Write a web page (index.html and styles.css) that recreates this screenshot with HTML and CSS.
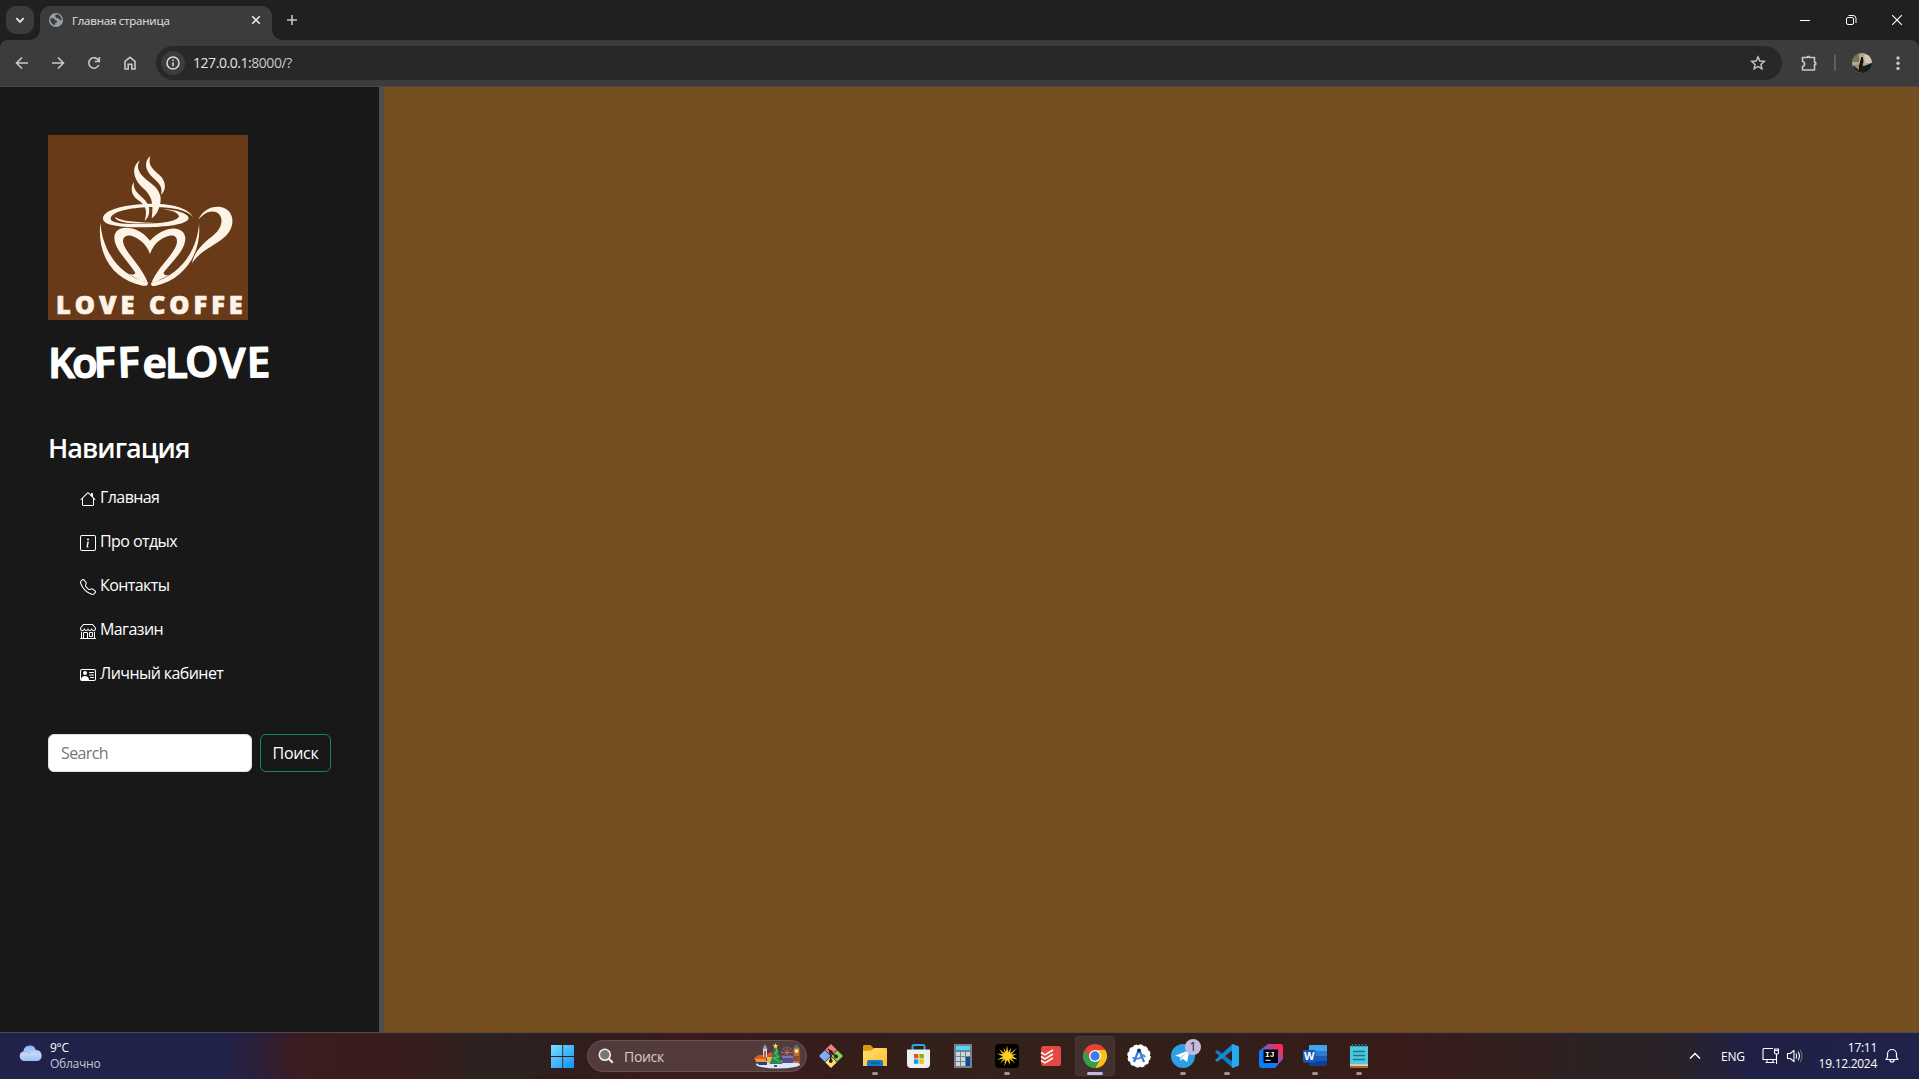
FILE: index.html
```html
<!DOCTYPE html>
<html lang="ru">
<head>
<meta charset="utf-8">
<title>Главная страница</title>
<link rel="stylesheet" href="styles.css">
</head>
<body>
<div class="screen">
  <header class="tabstrip">
    <div class="tab-search"><svg width="28" height="28" viewBox="0 0 28 28"><path d="M10.3 12.2l3.7 3.7 3.7-3.7" fill="none" stroke="#e3e3e3" stroke-width="1.9"/></svg></div>
    <div class="tab">
      <svg width="14" height="14" viewBox="0 0 14 14"><circle cx="7" cy="7" r="7" fill="#9aa0a8"/><path d="M1.6 5.2l3.2.1 1.5 1.9 1.9.5-.3 1.7-1.8.5v2.3A5.6 5.6 0 0 1 1.6 5.2zM6.5 1.5l3-.1a6 6 0 0 1 2.9 3.9v2.2l-1.7-.6-1.2-1.7-2.2-.1-1-1.3z" fill="#3c3c3c"/></svg>
      <span class="tab-title">Главная страница</span>
      <svg class="tab-close" width="10" height="10" viewBox="0 0 10 10"><path d="M1.2 1.2l7.6 7.6M8.800 1.2L1.2 8.800" stroke="#e3e3e3" stroke-width="1.6"/></svg>
    </div>
    <svg class="tab-new" width="12" height="12" viewBox="0 0 12 12"><path d="M6 1v10M1 6h10" stroke="#c7c7c7" stroke-width="1.6"/></svg>
    <div class="window-buttons">
      <svg width="46" height="40" viewBox="0 0 46 40"><path d="M18 20.500h10" stroke="#fff"/></svg>
      <svg width="46" height="40" viewBox="0 0 46 40"><rect x="18.500" y="17.500" width="7" height="7" rx="1.500" fill="none" stroke="#fff"/><path d="M20.500 15.500h4.500a3 3 0 0 1 3 3v4.500" fill="none" stroke="#fff"/></svg>
      <svg width="46" height="40" viewBox="0 0 46 40"><path d="M18.200 15.200l9.600 9.600M27.800 15.200l-9.600 9.600" stroke="#fff" stroke-width="1.200"/></svg>
    </div>
  </header>

  <div class="toolbar">
    <div class="nav-buttons">
      <svg viewBox="0 0 16 16"><path d="M14 8H3M8 2.500L2.500 8 8 13.500" /></svg>
      <svg viewBox="0 0 16 16"><path d="M2 8h11M8 2.500L13.500 8 8 13.500" /></svg>
      <svg viewBox="0 0 16 16"><path d="M12.800 10A5.200 5.200 0 1 1 12.600 5.500M13.300 2v4.500H8.800" /></svg>
      <svg viewBox="0 0 16 16"><path d="M3 14V6.300L8 2.300l5 4V14H9.800V9.300H6.200V14z" /></svg>
    </div>
    <div class="address">
      <span class="site-info"><svg width="16" height="16" viewBox="0 0 16 16"><circle cx="8" cy="8" r="6" fill="none" stroke="#dcdcdc" stroke-width="1.500"/><path d="M8 7.200v4M8 4.600v1.500" stroke="#dcdcdc" stroke-width="1.500"/></svg></span>
      <span class="url">127.0.0.1:<span class="url-dim">8000/?</span></span>
      <svg class="star" width="16" height="16" viewBox="0 0 16 16"><path d="M8 1.900l1.800 4.100 4.500.4-3.400 3 1 4.400L8 11.500l-3.900 2.300 1-4.400-3.400-3 4.500-.4z" fill="none" stroke="#c7c7c7" stroke-width="1.400"/></svg>
    </div>
    <div class="toolbar-end">
      <svg width="18" height="18" viewBox="0 0 18 18"><path d="M2.500 3.500H7.500V2.500h1.800v1h5.200v5h1.200v2h-1.200v5.500h-12v-3.500c2.800-.6 2.800-4.500 0-5z" fill="none" stroke="#c7c7c7" stroke-width="1.600" stroke-linejoin="round"/></svg>
      <span class="divider"></span>
      <svg width="20" height="20" viewBox="0 0 20 20"><defs><clipPath id="face"><circle cx="10" cy="10" r="10"/></clipPath></defs><g clip-path="url(#face)"><path d="M0 0h20v20H0z" fill="#b3a78f"/><path d="M0 0h7v9H0z" fill="#7d725d"/><path d="M12 2h8v8h-7z" fill="#cfc8b6"/><path d="M0 13l8-1 4 1 8-3v10H0z" fill="#23291f"/><path d="M9.300 4h1.500l.7 4-1 5-2 5-2 0 1-7z" fill="#16160f"/><path d="M2 13l5-2v6z" fill="#a48c66"/><path d="M11 14l9-4v10H9z" fill="#102219"/></g></svg>
      <svg class="kebab" width="6" height="16" viewBox="0 0 6 16"><g fill="#c7c7c7"><circle cx="3" cy="3" r="1.700"/><circle cx="3" cy="8.200" r="1.700"/><circle cx="3" cy="13.400" r="1.700"/></g></svg>
    </div>
  </div>

  <main class="page">
    <aside class="sidebar">
      <svg class="logo" viewBox="54 45 600 555" width="200" height="185">
        <path d="M54 45h600v555H54z" fill="#693a17"/>
        <g fill="#fdf3e6">
          <path d="M330 121C302 140 310 178 338 203C364 225 372 247 365 295C382 286 396 250 391 228C384 196 352 186 334 164C322 149 321 134 330 121Z"/>
          <path d="M361 108C340 125 346 153 369 173C388 190 399 200 393 224C407 212 409 192 396 173C382 155 350 144 361 108Z"/>
          <path d="M311 186C300 205 304 226 324 240C345 255 354 268 344 303C361 288 363 262 347 243C331 224 309 216 311 186Z"/>
          <path fill-rule="evenodd" d="M346 252C415 247 475 262 489 291C471 268 410 257 346 262C290 265 242 278 242 296C242 312 300 312 347 312C405 310 444 302 447 289C444 277 425 270 392 266C440 269 474 279 476 294C474 313 410 321 346 322C270 322 219 316 219 296C219 270 280 255 346 252Z"/>
          <path d="M255 291C280 307 330 306 380 309C320 313 258 311 255 291Z"/>
          <path d="M211 308C218 396 270 468 354 488C354 496 348 499 338 497C244 478 201 400 211 308Z"/>
          <path d="M507 312C515 397 466 478 375 498C365 499 362 496 364 489C449 466 500 397 507 312Z"/>
          <path d="M354 490C334 435 285 399 279 365C278 347 297 341 315 352C338 364 352 380 360 402C368 380 382 362 405 352C426 342 441 346 441 364C441 397 384 438 364 489L384 483C408 437 466 400 466 354C463 316 405 313 360 362C325 315 256 310 253 351C252 391 302 428 321 468L292 461Z"/>
          <path d="M401 445C392 459 385 472 380 484L418 465C400 469 399 461 401 445ZM314 445C321 459 316 468 297 462L346 491Z"/>
          <path d="M505 299C519 269 549 256 575 262C614 271 619 320 583 352C557 376 511 391 486 430C493 391 525 366 551 345C580 322 582 286 558 276C538 270 520 282 505 299Z"/>
        </g>
        <text class="logo-text" x="78" y="583" textLength="560" lengthAdjust="spacing">LOVE COFFE</text>
      </svg>
      <h1 class="brand"><svg width="240" height="56" viewBox="0 0 240 56"><text class="brand-text" y="43.500" x="0 24 46 70 94.500 117 138 171 199" rotate="0 0 -2 -2 0 0 -3 0 -1">KoFFeLOVE</text></svg></h1>
      <h2 class="nav-title">Навигация</h2>
      <nav class="nav">
        <a><svg viewBox="0 0 16 16"><path d="M8.707 1.500a1 1 0 0 0-1.414 0L.646 8.146a.5.5 0 0 0 .708.708L2 8.207V13.500A1.500 1.500 0 0 0 3.500 15h9a1.500 1.500 0 0 0 1.500-1.500V8.207l.646.647a.5.5 0 0 0 .708-.708L13 5.793V2.500a.5.5 0 0 0-.5-.5h-1a.5.5 0 0 0-.5.5v1.293zM13 7.207V13.500a.5.5 0 0 1-.5.5h-9a.5.5 0 0 1-.5-.5V7.207l5-5z"/></svg><span>Главная</span></a>
        <a><svg viewBox="0 0 16 16"><path d="M14 1a1 1 0 0 1 1 1v12a1 1 0 0 1-1 1H2a1 1 0 0 1-1-1V2a1 1 0 0 1 1-1zM2 0a2 2 0 0 0-2 2v12a2 2 0 0 0 2 2h12a2 2 0 0 0 2-2V2a2 2 0 0 0-2-2z"/><path d="m8.930 6.588-2.290.287-.082.380.450.083c.294.070.352.176.288.469l-.738 3.468c-.194.897.105 1.319.808 1.319.545 0 1.178-.252 1.465-.598l.088-.416c-.2.176-.492.246-.686.246-.275 0-.375-.193-.304-.533zM9 4.500a1 1 0 1 1-2 0 1 1 0 0 1 2 0"/></svg><span>Про отдых</span></a>
        <a><svg viewBox="0 0 16 16"><path d="M3.654 1.328a.678.678 0 0 0-1.015-.063L1.605 2.300c-.483.484-.661 1.169-.450 1.770a17.600 17.600 0 0 0 4.168 6.608 17.600 17.600 0 0 0 6.608 4.168c.601.211 1.286.033 1.770-.450l1.034-1.034a.678.678 0 0 0-.063-1.015l-2.307-1.794a.68.68 0 0 0-.580-.122l-2.190.547a1.750 1.750 0 0 1-1.657-.459L5.482 8.062a1.750 1.750 0 0 1-.460-1.657l.548-2.190a.68.68 0 0 0-.122-.580zM1.884.511a1.745 1.745 0 0 1 2.612.163L6.290 2.980c.329.423.445.974.315 1.494l-.547 2.190a.68.68 0 0 0 .178.643l2.457 2.457a.68.68 0 0 0 .644.178l2.189-.547a1.750 1.750 0 0 1 1.494.315l2.306 1.794c.829.645.905 1.870.163 2.611l-1.034 1.034c-.740.740-1.846 1.065-2.877.702a18.600 18.600 0 0 1-7.010-4.420 18.600 18.600 0 0 1-4.420-7.009c-.362-1.030-.037-2.137.703-2.877z"/></svg><span>Контакты</span></a>
        <a><svg viewBox="0 0 16 16"><path d="M2.970 1.350A1 1 0 0 1 3.730 1h8.540a1 1 0 0 1 .760.350l2.609 3.044A1.500 1.500 0 0 1 16 5.370v.255a2.375 2.375 0 0 1-4.250 1.458A2.370 2.370 0 0 1 9.875 8 2.370 2.370 0 0 1 8 7.083 2.370 2.370 0 0 1 6.125 8a2.370 2.370 0 0 1-1.875-.917A2.375 2.375 0 0 1 0 5.625V5.370a1.500 1.500 0 0 1 .361-.976zm1.780 4.275a1.375 1.375 0 0 0 2.750 0 .5.5 0 0 1 1 0 1.375 1.375 0 0 0 2.750 0 .5.5 0 0 1 1 0 1.375 1.375 0 1 0 2.750 0V5.370a.5.5 0 0 0-.120-.325L12.270 2H3.730L1.120 5.045A.5.5 0 0 0 1 5.370v.255a1.375 1.375 0 0 0 2.750 0 .5.5 0 0 1 1 0M1.500 8.500A.5.5 0 0 1 2 9v6h1v-5a1 1 0 0 1 1-1h3a1 1 0 0 1 1 1v5h6V9a.5.5 0 0 1 1 0v6h.5a.5.5 0 0 1 0 1H.5a.5.5 0 0 1 0-1H1V9a.5.5 0 0 1 .5-.5M4 15h3v-5H4zm5-5a1 1 0 0 1 1-1h2a1 1 0 0 1 1 1v3a1 1 0 0 1-1 1h-2a1 1 0 0 1-1-1zm3 0h-2v3h2z"/></svg><span>Магазин</span></a>
        <a><svg viewBox="0 0 16 16"><path d="M5 8a2 2 0 1 0 0-4 2 2 0 0 0 0 4m4-2.500a.5.5 0 0 1 .5-.5h4a.5.5 0 0 1 0 1h-4a.5.5 0 0 1-.5-.5M9 8a.5.5 0 0 1 .5-.5h4a.5.5 0 0 1 0 1h-4A.5.5 0 0 1 9 8m1 2.500a.5.5 0 0 1 .5-.5h3a.5.5 0 0 1 0 1h-3a.5.5 0 0 1-.5-.5"/><path d="M2 2a2 2 0 0 0-2 2v8a2 2 0 0 0 2 2h12a2 2 0 0 0 2-2V4a2 2 0 0 0-2-2zM1 4a1 1 0 0 1 1-1h12a1 1 0 0 1 1 1v8a1 1 0 0 1-1 1H8.960q.040-.245.040-.5C9 10.567 7.210 9 5 9c-2.086 0-3.800 1.398-3.984 3.181A1 1 0 0 1 1 12z"/></svg><span>Личный кабинет</span></a>
      </nav>
      <form class="search"><input class="search-field" type="search" placeholder="Search"><button class="search-button" type="button">Поиск</button></form>
    </aside>
    <section class="content"></section>
  </main>

  <footer class="taskbar">
    <div class="weather">
      <svg width="26" height="18" viewBox="0 0 26 18"><defs><linearGradient id="cl" x2="0" y2="1"><stop stop-color="#86b1ef"/><stop offset=".55" stop-color="#c3d9fa"/><stop offset="1" stop-color="#9dbdf5"/></linearGradient></defs><path d="M6 16a5 5 0 0 1-.5-9.800A6.300 6.300 0 0 1 17.800 5a5.600 5.600 0 0 1 1.700 11z" fill="url(#cl)"/><path d="M6 6.200c3-.5 5 1 5.500 2.500" fill="none" stroke="#8db4ee"/></svg>
      <div class="weather-text"><b>9°C</b><span>Облачно</span></div>
    </div>
    <div class="apps">
      <div class="app start"><svg width="24" height="24" viewBox="0 0 24 24"><defs><linearGradient id="win" x2="1" y2="1"><stop stop-color="#7fdcff"/><stop offset="1" stop-color="#0c93f5"/></linearGradient></defs><path d="M0 1h11.300v11H0zM12.200 1H23v11H12.200zM0 13h11.300v11H0zM12.200 13H23v11H12.200z" fill="url(#win)"/></svg></div>
      <div class="task-search">
        <svg width="16" height="16" viewBox="0 0 16 16"><circle cx="6.800" cy="6.800" r="5.500" fill="#777" stroke="#eee" stroke-width="1.600"/><path d="M10.800 10.800l4 4" stroke="#eee" stroke-width="2"/></svg>
        <span>Поиск</span>
        <svg class="fair" width="48" height="26" viewBox="0 0 48 26"><ellipse cx="25" cy="21.500" rx="22" ry="4" fill="#dde5ff"/><path d="M1 15h12v5H4z" fill="#e99a35"/><path d="M1 15l5-3h8v4H1z" fill="#df5b2b"/><path d="M3 19h11v3H6z" fill="#294274"/><path d="M10 5h4v9h-4z" fill="#cbd3e3"/><path d="M9.500 6l2.500-5 2.500 5z" fill="#8f9bb5"/><path d="M11 8h2v6h-2z" fill="#bd5951"/><path d="M14 11l4-2 3 3v8h-7z" fill="#d9552f"/><path d="M14 14h8v6h-8z" fill="#f0b04b"/><circle cx="34" cy="9.500" r="5.500" fill="none" stroke="#6b4b54" stroke-width="1.600"/><path d="M34 4v11M28.500 9.500h11M30 5.500l8 8M38 5.500l-8 8" stroke="#85707d"/><circle cx="34" cy="9.500" r="1.500" fill="#e25b4d"/><path d="M29 13h11v7H29z" fill="#554d87"/><path d="M29 13h11v2H29z" fill="#7779b0"/><path d="M40.500 5h6v15h-6z" fill="#ba7335"/><path d="M40 5l3.500-4L47 5z" fill="#4d7770"/><circle cx="43.500" cy="8" r="2" fill="#ffe18d"/><path d="M41 13h5v5h-5z" fill="#8c4933"/><path d="M22 3l4 6h-2l4 5h-2l3 7H16l3-7h-2l4-5h-2z" transform="translate(.5)" fill="#24894b"/><path d="M22 4l2 5-3 1 4 4-5 1 6 4" transform="translate(.5)" fill="none" stroke="#74c36b"/><path d="M21 22h3v2h-3z" fill="#6d4937"/><path d="M22.500 0l.8 2 2 .1-1.600 1.300.5 2-1.700-1.100-1.700 1.100.5-2-1.600-1.300 2-.1z" fill="#ffd64c"/></svg>
      </div>
      <div class="app"><svg width="26" height="26" viewBox="0 0 26 26"><path d="M13 1l5.800 5.800L13 12.600 7.200 6.800z" fill="#f27e7e"/><path d="M19.200 7.200L25 13l-5.800 5.800L13.400 13z" fill="#8cd25c"/><path d="M6.800 7.200L12.600 13l-5.800 5.800L1 13z" fill="#7aaefa"/><path d="M13 13.400l5.800 5.800L13 25l-5.800-5.800z" fill="#ffe07a"/><path d="M12.800 8v11M10 6l8 7.500" stroke="#32221d" stroke-width="1.500"/><circle cx="12.800" cy="9" r="1.900" fill="#32221d"/><circle cx="18" cy="13.500" r="1.900" fill="#32221d"/><circle cx="12.800" cy="18" r="1.900" fill="#32221d"/></svg></div>
      <div class="app running"><svg width="26" height="26" viewBox="0 0 26 26"><defs><linearGradient id="fo" x2="1" y2="1"><stop stop-color="#ffe074"/><stop offset="1" stop-color="#fdbd29"/></linearGradient></defs><path d="M1 3.500a1.500 1.500 0 0 1 1.500-1.500h6L11 4.500V9H1z" fill="#dd9a07"/><path d="M1 8l8-.5L12 5h12a1 1 0 0 1 1 1v17H1z" fill="url(#fo)"/><path d="M5 23v-4a2 2 0 0 1 2-2h12a2 2 0 0 1 2 2v4z" fill="#1279cb"/><path d="M8.500 20h9" stroke="#075a9e" stroke-width="1.500"/></svg></div>
      <div class="app"><svg width="26" height="26" viewBox="0 0 26 26"><path d="M6.500 8V3.500A1.500 1.500 0 0 1 8 2h9A1.500 1.500 0 0 1 18.500 3.500V8" fill="none" stroke="#23a9e8" stroke-width="2"/><path d="M1 6.500h23V21a4 4 0 0 1-4 4H5a4 4 0 0 1-4-4z" fill="#efeff2"/><path d="M8 11h4.400v4.400H8z" fill="#f25022"/><path d="M13.400 11h4.400v4.400h-4.400z" fill="#7fba00"/><path d="M8 16.400h4.400v4.400H8z" fill="#00a4ef"/><path d="M13.400 16.400h4.400v4.400h-4.400z" fill="#ffb900"/></svg></div>
      <div class="app"><svg width="26" height="26" viewBox="0 0 26 26"><path d="M4 1h18v24H4z" fill="#75818d"/><path d="M6 3h14v4H6z" fill="#4fd8fb"/><path d="M6 9h4v4H6zM11 9h4v4h-4zM16 9h4v4h-4zM6 14h4v4H6zM11 14h4v4h-4zM6 19h4v4H6zM11 19h4v4h-4z" fill="#ced6dd"/><path d="M16 14h4v9h-4z" fill="#0d4a95"/></svg></div>
      <div class="app running"><svg width="26" height="26" viewBox="0 0 26 26"><rect x="1" y="1" width="24" height="24" rx="4" fill="#000"/><path d="M13 2.500l1.200 6.800L17 5l-.8 5.500L23 5l-5.500 6.500 5.500-.5-4.500 2 5 3.500-6.300-1.200 4 5.200-5.700-4.500.5 6-2.700-5-3 6 .8-6.800L6 20.500l3.500-5L3 17l6-3.500-6-3 6 .8L5 6l5.700 4.300L9.500 4.500l2.500 4.500z" fill="#ffcf25"/></svg></div>
      <div class="app"><svg width="26" height="26" viewBox="0 0 26 26"><rect x="3" y="3" width="20" height="20" rx="2.500" fill="#e04a3f"/><path d="M3 9.500l4 2.300L15 7M3 13.500l4 2.300L15 11M3 17.500l4 2.300L15 15" fill="none" stroke="#fff" stroke-width="1.500"/></svg></div>
      <div class="app active"><svg width="26" height="26" viewBox="0 0 26 26"><path d="M13 7h10.400A12 12 0 0 1 13 25l5.200-9z" fill="#fbc116"/><path d="M2.600 7l5.200 9L13 25l5.200-9L13 13z" fill="#34a04c"/><path d="M2.600 7A12 12 0 0 0 13 25l5.200-9-5.200-3z" fill="#34a04c"/><path d="M2.600 7A12 12 0 0 1 23.400 7H13l-5.200 9z" fill="#ea4335"/><circle cx="13" cy="13" r="6" fill="#fff"/><circle cx="13" cy="13" r="4.700" fill="#3b7df0"/></svg></div>
      <div class="app"><svg width="26" height="26" viewBox="0 0 26 26"><circle cx="13" cy="13" r="11" fill="#fff"/><circle cx="13" cy="13" r="11" fill="none" stroke="#fff" stroke-width="1.500" stroke-dasharray="3.500 2.260"/><path d="M12.500 7.500L8 19M13.500 7.500L18 19" stroke="#3c78e5" stroke-width="2.200"/><path d="M6.500 14.500c4 2.500 8.500 1 11-3" fill="none" stroke="#3c78e5" stroke-width="1.500"/><circle cx="13" cy="7.500" r="2" fill="#25384a"/><path d="M17 12l2.500 2" stroke="#35c26e" stroke-width="2"/></svg></div>
      <div class="app running"><svg width="26" height="26" viewBox="0 0 26 26"><circle cx="13" cy="13" r="12" fill="#2c9fe5"/><path d="M5 12.700L19.500 7l-2.400 12-4.400-3.200-2.200 2.100-.5-3.900z" fill="#fff"/><path d="M10 14l7-5-5.300 6.500-1.200 2.400z" fill="#b9d8ed"/></svg><span class="badge">1</span></div>
      <div class="app running"><svg width="26" height="26" viewBox="0 0 26 26"><path d="M1 9l2.200-2L19 19v6L18 24.500z" fill="#0f7ec8"/><path d="M1 17l2.200 2L19 7V1l-1 .5z" fill="#1689d3"/><path d="M19 1l6 2.500v19L19 25l-1-.5V1.500z" fill="#29a8ee"/></svg></div>
      <div class="app"><svg width="26" height="26" viewBox="0 0 26 26"><defs><linearGradient id="ij" x1="0" y1="1" x2="1" y2="0"><stop offset=".35" stop-color="#087cfa"/><stop offset=".6" stop-color="#8b54b8"/><stop offset=".85" stop-color="#fe2857"/></linearGradient></defs><path d="M1 8l9-7h13.500L25 2.500V16l-8 9H3l-2-2z" fill="url(#ij)"/><path d="M5.500 6.500H20V20H5.500z" fill="#000"/><text class="glyph ij" x="7" y="14">IJ</text><path d="M7.500 17.300h5" stroke="#fff"/></svg></div>
      <div class="app running"><svg width="26" height="26" viewBox="0 0 26 26"><path d="M7 2h18v6H7z" fill="#41a5ee"/><path d="M7 8h18v5H7z" fill="#2b7cd3"/><path d="M7 13h18v5H7z" fill="#185abd"/><path d="M7 18h18v5H7z" fill="#103f91"/><rect x="1" y="7" width="12.500" height="12.500" rx="1" fill="#185abd"/><text class="glyph" x="2" y="17" textLength="10.500" lengthAdjust="spacingAndGlyphs">W</text></svg></div>
      <div class="app running"><svg width="26" height="26" viewBox="0 0 26 26"><path d="M4 3h18v19H4z" fill="#55c7dd"/><path d="M4 22h18v3H4z" fill="#b4621b"/><path d="M4 21.500h18v1.300H4z" fill="#f2e6d5"/><path d="M7 8.500h12M7 12.500h12M7 16.500h12" stroke="#107a91" stroke-width="1.500"/><path d="M6.500 1v3M9.700 1v3M13 1v3M16.300 1v3M19.500 1v3" stroke="#137a93" stroke-width="1.500"/></svg></div>
    </div>
    <div class="tray">
      <svg width="12" height="8" viewBox="0 0 12 8"><path d="M1 6.500l5-5 5 5" fill="none" stroke="#fff" stroke-width="1.500"/></svg>
      <span class="lang">ENG</span>
      <svg class="net" width="18" height="18" viewBox="0 0 18 18"><path d="M11 1.500H2A1 1 0 0 0 1 2.500v10h13.500M5 12.500v3M11 12.500v3M3.500 15.500h9M14.500 7v10M12.500 2v3.500a1.500 1.500 0 0 0 1.500 1.500h1a1.500 1.500 0 0 0 1.500-1.500V2zM12.500 3.500h4" fill="none" stroke="#fff" stroke-width="1.100"/></svg>
      <svg class="volume" width="18" height="16" viewBox="0 0 18 16"><path d="M1.500 5.500h2.800L8 2.300v11.400L4.300 10.500H1.500z" fill="none" stroke="#fff" stroke-width="1.100" stroke-linejoin="round"/><path d="M10 5.500q1.500 2.500 0 5M12 3.700q3 4.300 0 8.600" fill="none" stroke="#fff" stroke-width="1.100"/><path d="M14 2q4 6 0 12" fill="none" stroke="#77778c"/></svg>
      <div class="clock"><span>17:11</span><span>19.12.2024</span></div>
      <svg class="bell" width="14" height="16" viewBox="0 0 14 16"><path d="M1 11.500L2.500 9V6a4.500 4.500 0 0 1 9 0v3l1.500 2.500zM5 12a2 2 0 0 0 4 0" fill="none" stroke="#fff" stroke-width="1.200" stroke-linejoin="round"/></svg>
    </div>
  </footer>
</div>
</body>
</html>
```
FILE: styles.css
```css
* { box-sizing: border-box; }
body { margin: 0; font-family: "Open Sans", "Noto Sans", sans-serif; color: #fff; }
svg { display: block; flex: none; }
.screen { width: 1919px; height: 1079px; display: flex; flex-direction: column; overflow: hidden; background: #1f2120; }

/* browser tabs */
.tabstrip { height: 40px; flex: none; display: flex; align-items: flex-start; padding-left: 6px; }
.tab-search { width: 28px; height: 28px; margin: 6px 6px 0 0; border-radius: 10px; background: #3c3c3c; }
.tab { position: relative; display: flex; align-items: center; width: 232px; height: 34px; margin-top: 6px; padding: 0 11px 6px 9px; background: #3c3c3c; border-radius: 10px 10px 0 0; }
.tab::before, .tab::after { content: ""; position: absolute; bottom: 0; width: 10px; height: 10px; }
.tab::before { right: 100%; background: radial-gradient(circle at 0 0, transparent 9.500px, #3c3c3c 10px); }
.tab::after { left: 100%; background: radial-gradient(circle at 100% 0, transparent 9.500px, #3c3c3c 10px); }
.tab-title { margin-left: 9px; padding-top: 1px; font-size: 11.500px; line-height: 16px; letter-spacing: -0.220px; color: #e3e3e3; white-space: nowrap; }
.tab-close { margin-left: auto; }
.tab-new { margin: 14px 0 0 14px; }
.window-buttons { display: flex; margin: 0 -1px 0 auto; }

/* browser toolbar */
.toolbar { height: 47px; flex: none; display: flex; align-items: center; padding: 0 18px 1px 14px; background: #3c3c3c; border-bottom: 1px solid #484848; border-radius: 8px 8px 0 0; }
.nav-buttons { display: flex; gap: 20px; }
.nav-buttons svg { width: 16px; height: 16px; fill: none; stroke: #c7c7c7; stroke-width: 1.600; }
.address { display: flex; align-items: center; width: 1626px; height: 34px; margin-left: 18px; padding: 0 16px 0 5px; border-radius: 17px; background: #282828; }
.site-info { display: flex; align-items: center; justify-content: center; width: 24px; height: 24px; border-radius: 12px; background: #3c3c3c; }
.url { margin-left: 8px; font-size: 14px; letter-spacing: -0.450px; color: #e3e3e3; }
.url-dim { color: #c7c7c7; }
.star { margin-left: auto; }
.toolbar-end { display: flex; align-items: center; flex: 1; margin-left: 18px; }
.divider { width: 2px; height: 16px; margin: 0 16px; background: #5e5e5e; }
.kebab { margin-left: auto; }

/* site */
.page { flex: 1; display: flex; min-height: 0; }
.sidebar { width: 384px; flex: none; padding: 48px 48px 0; background: #181818; border-right: 5px solid #4d4d4d; }
.content { flex: 1; background: #754f20; }
.logo-text { font: 800 76px "Open Sans", sans-serif; fill: #fdf3e6; stroke: #fdf3e6; stroke-width: 2px; stroke-linejoin: round; }
.brand { margin: 14px 0 0; height: 56px; font-size: 40px; line-height: 1; }
.brand svg { overflow: visible; }
.brand-text { font: 600 42px "Noto Sans", sans-serif; fill: #fff; stroke: #fff; stroke-width: 1.200px; stroke-linejoin: round; }
.nav-title { margin: 39px 0 0; font-size: 27px; font-weight: 600; line-height: 38px; letter-spacing: -0.950px; }
.nav { display: flex; flex-direction: column; margin: 8px 0 0 32px; }
.nav a { display: flex; align-items: center; gap: 4px; height: 44px; font-size: 16px; letter-spacing: -0.580px; }
.nav svg { width: 16px; height: 16px; margin-top: 4px; fill: #fff; }
.search { display: flex; gap: 8px; margin: 39px 0 0; }
.search-field { width: 204px; height: 38px; padding: 0 12px; border: 1px solid #dee2e6; border-radius: 6px; background: #fff; font: 16px "Open Sans", sans-serif; letter-spacing: -0.600px; }
.search-field::placeholder { color: #707880; }
.search-button { width: 71px; height: 38px; padding: 0; border: 1px solid #198754; border-radius: 6px; background: none; color: #fff; font: 16px "Open Sans", sans-serif; letter-spacing: -0.300px; }

/* taskbar */
.taskbar { height: 47px; flex: none; display: grid; grid-template-columns: 540px 1fr 259px; border-top: 1px solid #4c4a52; background: linear-gradient(90deg, #20224a 0, #20224a 225px, #3b1c20 300px, #3a1b1b 390px, #2c2220 490px, #2f1e1e 560px, #3c1a1a 680px, #341d1a 860px, #33211a 980px, #321f19 1200px, #391b1a 1407px, #2c2222 1590px, #29222a 1680px, #202046 1750px, #20224a 1919px); }
.weather { display: flex; align-items: center; padding: 0 0 4px 18px; gap: 6px; }
.weather-text { display: flex; flex-direction: column; font-size: 12px; line-height: 16px; padding-top: 4px; letter-spacing: -0.250px; }
.weather-text b { font-weight: 500; }
.weather-text span { color: #c5c7d2; }
.apps { display: flex; align-items: center; }
.app { position: relative; display: flex; align-items: center; justify-content: center; width: 40px; height: 40px; margin: 0 2px; border-radius: 4px; }
.start { width: 40px; margin: 0 4px 0 3px; }
.task-search { display: flex; align-items: center; width: 220px; height: 32px; margin-right: 2px; padding: 0 5px 0 10px; border: 1px solid #6a5252; border-radius: 16px; background: #533a3b; font-size: 14px; letter-spacing: -0.300px; color: #d6cccb; }
.task-search span { margin-left: 10px; }
.fair { margin-left: auto; }
.active { background: #42302e; box-shadow: inset 0 0 0 1px #4a3835; }
.running::after, .active::after { content: ""; position: absolute; bottom: 1px; left: 17px; width: 6px; height: 3px; border-radius: 2px; background: #a09590; }
.active::after { left: 12px; width: 16px; background: #c4bce0; }
.badge { position: absolute; left: 22px; top: 3px; width: 16px; height: 16px; border-radius: 8px; background: #c4bce0; color: #222; font-size: 12px; line-height: 16px; text-align: center; }
.glyph { font: 700 11px "Open Sans", sans-serif; fill: #fff; }
.ij { font: 700 8px "Liberation Mono", monospace; }
.tray { display: flex; align-items: center; padding: 0 20px 0 29px; }
.lang { margin-left: 20px; width: 25px; font-size: 12px; letter-spacing: -0.200px; }
.net { margin-left: 16px; }
.volume { margin-left: 6px; }
.clock { display: flex; flex-direction: column; align-items: flex-end; margin-left: auto; font-size: 12px; line-height: 16px; letter-spacing: -0.280px; }
.bell { margin-left: 8px; }
```
